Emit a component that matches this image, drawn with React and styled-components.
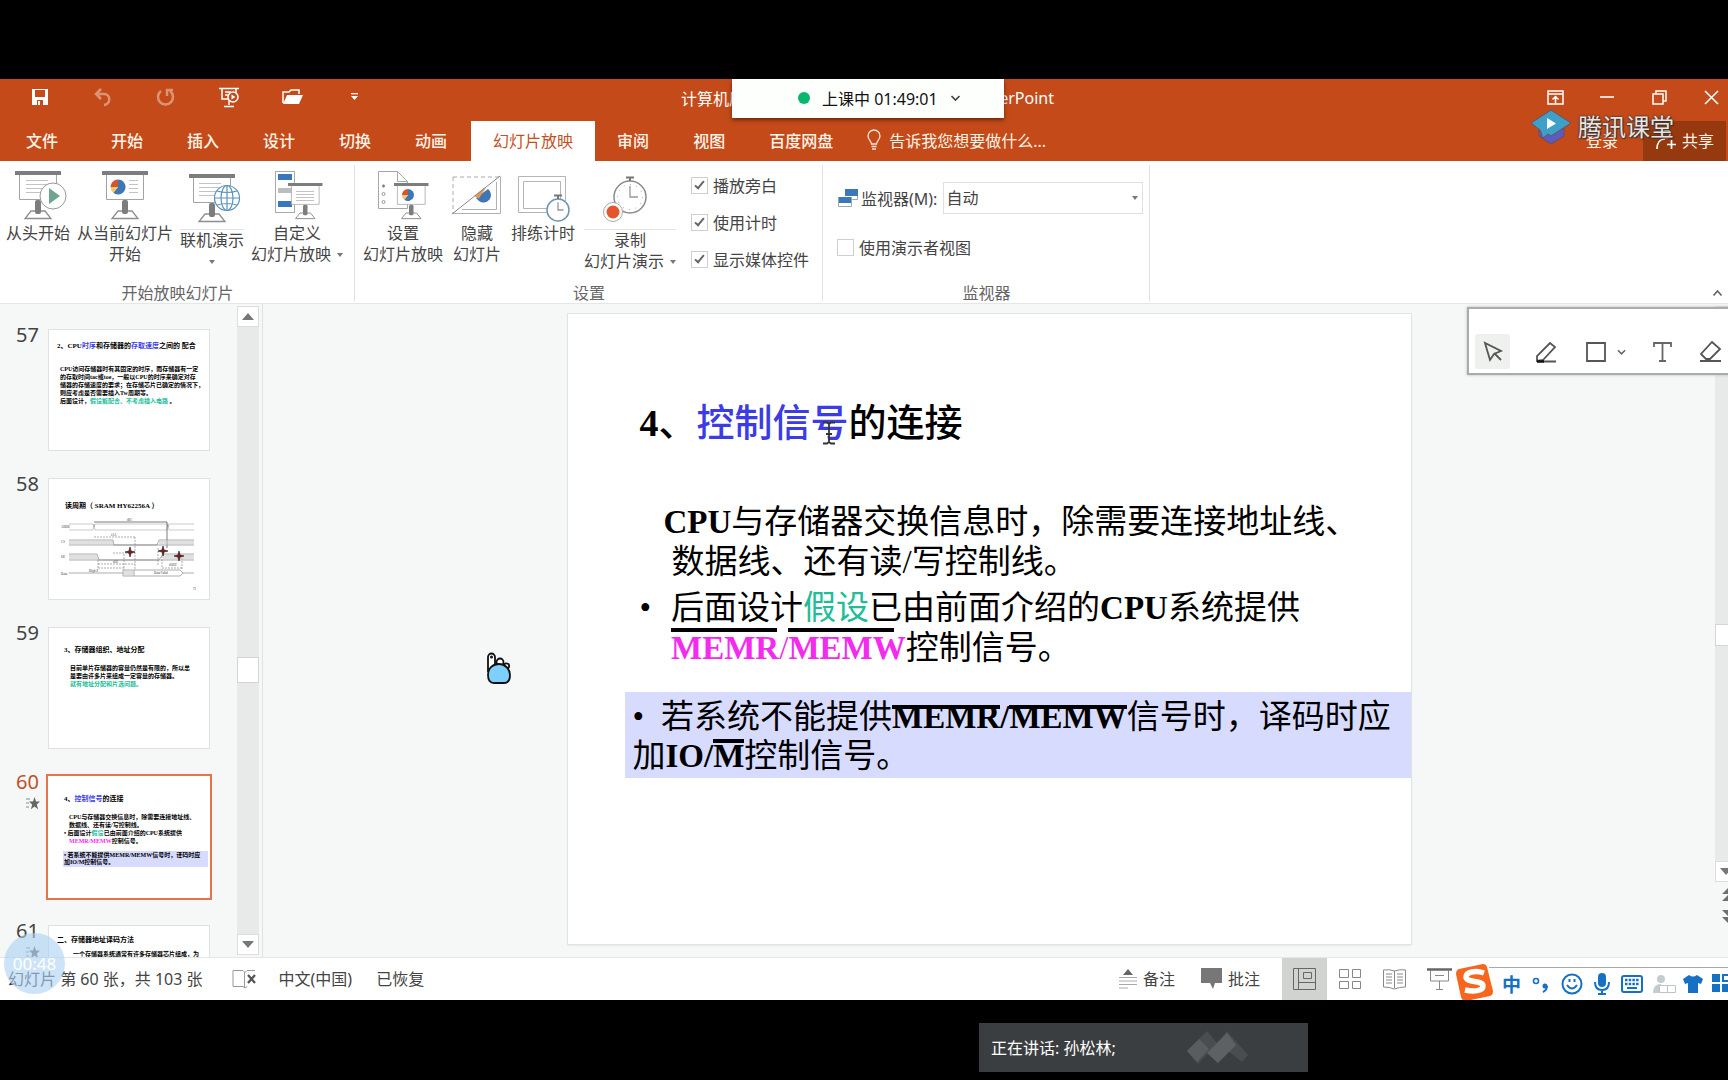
import React, { useState } from 'react';
import styled, { createGlobalStyle, css } from 'styled-components';

const ui = '"Noto Sans", "Noto Sans CJK SC", sans-serif';
const serif = '"Liberation Serif", "Noto Sans CJK SC", serif';

const Global = createGlobalStyle`
  *, *::before, *::after { box-sizing: border-box; }
  body { margin: 0; background: #000; font-family: ${ui}; font-size: 16px; color: #444; }
  button, select, input { font: inherit; color: inherit; }
  button { border: 0; padding: 0; background: none; cursor: pointer; }
  svg { display: block; flex: none; overflow: visible; }
  h1, h2, p, ul, ol { margin: 0; padding: 0; font: inherit; list-style: none; }
`;

/* ---------- shell ---------- */
const Stage = styled.div`
  position: relative; height: 100vh; min-height: 700px; padding: 79px 0 80px;
  display: flex; flex-direction: column; overflow: hidden; background: #000;
`;
const Header = styled.header`position: relative; flex: none; background: #c44b19; color: #fff;`;
const TitleRow = styled.div`display: flex; justify-content: space-between; height: 42px; padding: 0 7px 6px 30px; align-items: center;`;
const Row = styled.div`display: flex; align-items: center; gap: ${p => p.$gap || 0}px;`;
const IconButton = styled.button`
  display: flex; align-items: center; justify-content: center;
  width: ${p => p.$w || 20}px; height: ${p => p.$h || 22}px; opacity: ${p => (p.$dim ? 0.4 : 1)};
`;
const DocTitle = styled.h1`
  position: absolute; top: 0; left: 50%; width: 373px; margin-left: -183px; height: 42px;
  display: flex; justify-content: space-between; align-items: center; padding-bottom: 4px; white-space: nowrap;
`;
const ClassPill = styled.button`
  position: absolute; top: 0; left: 50%; margin-left: -132px; width: 272px; height: 39px; background: #fdfffd; color: #111;
  display: flex; align-items: center; gap: 12px; padding: 0 0 2px 66px; box-shadow: 0 2px 4px rgba(60, 15, 0, .65); white-space: nowrap;
`;
const Dot = styled.i`width: 12px; height: 12px; border-radius: 50%; background: #07b86c;`;
const TabRow = styled.nav`display: flex; align-items: stretch; height: 40px; color: #fff3e8;`;
const Tab = styled.button`
  padding: 0 22px; line-height: 38px; height: 40px; white-space: nowrap; font-weight: 500;
  ${p => p.$file && css`padding: 0 31px 0 26px;`}
  ${p => p.$active && css`background: #fff; color: #c4501f; margin-left: 2px; font-weight: 400;`}
`;
const TellMe = styled.button`display: flex; align-items: center; gap: 8px; margin-left: 12px; padding-bottom: 2px; white-space: nowrap;`;
const Login = styled.button`margin-left: auto; padding: 0 25px 2px 0;`;
const Share = styled.button`
  display: flex; align-items: center; gap: 6px; width: 83px; padding: 0 0 2px 13px; margin-right: 2px; background: #97390f;
`;
const Watermark = styled.div`
  position: absolute; right: 54px; top: 30px; display: flex; align-items: center; gap: 6px; white-space: nowrap;
  font-size: 24px; line-height: 36px; color: #ece4e0; text-shadow: 0 0 2px #333, 0 0 2px #333, 1px 1px 1px #333;
`;

/* ---------- ribbon ---------- */
const Ribbon = styled.section`display: flex; flex: none; height: 143px; background: #fff; border-bottom: 1px solid #e4e7e5; position: relative;`;
const GroupBox = styled.div`
  position: relative; display: flex; flex-direction: column; width: ${p => p.$w}px; color: #444;
  &::after { content: ''; position: absolute; right: 0; top: 4px; bottom: 2px; width: 1px; background: #e2e2e2; }
`;
const GroupBody = styled.div`flex: 1; display: flex; align-items: flex-start; gap: ${p => p.$gap}px; padding: 9px 0 0 ${p => p.$left}px;`;
const GroupName = styled.div`height: 21px; line-height: 22px; text-align: center; color: #666;`;
const BigButton = styled.button`display: flex; flex-direction: column; align-items: center; line-height: 21px; white-space: nowrap;`;
const BigIcon = styled.span`
  display: flex; justify-content: center; align-items: flex-start; width: 100%; height: 53px;
  ${p => p.$split && css`height: 60px; padding-top: 3px; border-bottom: 1px solid #e4e4e4;`}
`;
const Line = styled.span`display: flex; align-items: center; justify-content: center; gap: 6px; height: 21px;`;
const CaretMark = styled.i`border: 3px solid transparent; border-top: 4px solid #777; border-bottom: 0;`;
const Checks = styled.div`display: flex; flex-direction: column; gap: 13px; padding: 3px 0 0 6px;`;
const CheckLabel = styled.label`display: flex; align-items: center; gap: 5px; height: 24px; white-space: nowrap;`;
const Box = styled.input.attrs({ type: 'checkbox' })`
  appearance: none; position: relative; width: 17px; height: 17px; margin: 0; border: 1px solid #cfcfcf; background: #fff;
  &:checked::after {
    content: ''; position: absolute; left: 5px; top: 1px; width: 5px; height: 10px;
    border: solid #666; border-width: 0 2px 2px 0; transform: rotate(40deg);
  }
`;
const MonitorBody = styled.div`flex: 1; display: flex; flex-direction: column; gap: 21px; padding: 21px 0 0 14px;`;
const MonitorRow = styled.div`display: flex; align-items: center; gap: 2px; white-space: nowrap; height: 32px;`;
const SelectWrap = styled.div`
  position: relative; width: 200px; margin-left: 4px;
  & > i { position: absolute; right: 5px; top: 14px; pointer-events: none; }
`;
const Select = styled.select`appearance: none; width: 100%; height: 32px; padding: 0 2px; border: 1px solid #e0e0e0; border-radius: 0; background: #fff;`;
const Collapse = styled.button`position: absolute; right: 4px; bottom: 6px;`;

/* ---------- workspace ---------- */
const Work = styled.main`position: relative; flex: 1; min-height: 0; display: flex; background: #f5f8f6; overflow: hidden;`;
const ThumbPane = styled.ol`width: 237px; flex: none; overflow: hidden; padding: 25px 0 0 16px; display: flex; flex-direction: column; gap: 27px;`;
const ThumbItem = styled.li`display: flex; flex: none; gap: 8px; height: 122px;`;
const ThumbMeta = styled.div`
  width: 24px; font-size: 20px; line-height: 20px; color: ${p => (p.$on ? '#c0502c' : '#444')};
  display: flex; flex-direction: column; gap: 5px; margin-top: -4px;
  & > svg { align-self: flex-end; }
`;
const Thumb = styled.div`
  width: 162px; height: 122px; background: #fff; overflow: hidden; color: #000; font-family: ${serif}; font-weight: 700;
  font-size: 6px; line-height: 8px; white-space: nowrap; border: 1px solid #dfe2e0;
  display: flex; flex-direction: column; padding: ${p => p.$pad};
  ${p => p.$on && css`border: 0; outline: 2px solid #e5744a; outline-offset: 0;`}
`;
const ThumbTitle = styled.p`font-size: 7px; line-height: 10px; margin: 0 0 ${p => p.$gap}px ${p => p.$out || 0}px;`;
const MiniBullet = styled.p`text-indent: -5px;`;
const MiniMark = styled.div`background: #d7dcff; margin: 6px 2px 0 -6px; padding: 1px; line-height: 7px;`;
const Ink = styled.span`color: ${p => p.$c};`;

const Bar = styled.div`
  flex: none; width: ${p => p.$w}px; display: flex; flex-direction: column; background: #e8eae9; overflow: hidden;
  margin: ${p => p.$m || '0'};
`;
const BarButton = styled.button`
  flex: none; height: 21px; width: 22px; background: #fff; border: 1px solid #dcdedd; display: flex; align-items: center; justify-content: center;
`;
const Handle = styled.div`flex: none; width: 22px; height: ${p => p.$h}px; background: #fff; border: 1px solid #d4d6d5;`;
const Grow = styled.div`flex: ${p => p.$n} 1 0;`;
const JumpBox = styled.div`background: #f5f8f6; display: flex; flex-direction: column; gap: 9px; padding: 5px 0 33px 4px;`;

const Editor = styled.section`flex: 1; min-width: 0; border-left: 1px solid #dfe2e0; margin-left: 3px; padding: 10px 12px 13px; display: flex; justify-content: center;`;
const Slide = styled.article`
  width: 843px; max-width: 100%; background: #fff; box-shadow: 0 0 0 1px #e2e4e3, 0 1px 2px #ccc; color: #000;
  font-family: ${serif}; font-size: 33px; line-height: 40px; white-space: nowrap; padding: 87px 0 0 57px; overflow: hidden;
`;
const SlideTitle = styled.h2`font-size: 38px; line-height: 44px; font-weight: 500; margin: 0 0 57px 15px;`;
const Para = styled.p`padding-left: 47px; text-indent: ${p => p.$indent || 0}px;`;
const Bullet = styled.p`display: flex; gap: 20px; padding-left: 15px; margin-top: 6px;`;
const Marked = styled.div`background: #d7dcff; margin-top: 24px; padding: 5px 0 2px 8px; height: 86px;`;
const MarkedLine = styled.p`height: 39px; & > i { font-style: normal; margin-right: 17px; }`;
const Signal = styled.b`
  position: relative; color: ${p => p.$c || 'inherit'};
  &::before { content: ''; position: absolute; left: 0; right: ${p => p.$short || 0}px; top: ${p => p.$top}px; height: 4px; background: #000; }
`;
const Pointer = styled.span`position: absolute; left: ${p => p.$x}px; top: ${p => p.$y}px; pointer-events: none;`;

const Float = styled.div`
  position: absolute; right: -20px; top: 3px; width: 281px; height: 68px; background: #fff; border: 2px solid #a9acaa; box-shadow: 0 0 3px #bbb;
  display: flex; align-items: flex-end; gap: 18px; padding: 0 0 4px 6px; overflow: hidden;
`;
const Tool = styled.button`
  flex: none; width: ${p => p.$w || 35}px; height: 35px; display: flex; align-items: center; justify-content: center; gap: 11px; border-radius: 3px;
  background: ${p => (p.$on ? '#eff1ef' : 'transparent')};
`;

/* ---------- status ---------- */
const Status = styled.footer`position: relative; flex: none; height: 43px; display: flex; align-items: center; background: #fff; border-top: 1px solid #e4e7e5; padding-left: 8px; white-space: nowrap; overflow: hidden;`;
const StatusText = styled.span`padding-bottom: 2px; margin-right: ${p => p.$r || 0}px;`;
const Spacer = styled.div`flex: 1;`;
const StatusButton = styled.button`display: flex; align-items: center; gap: 6px; padding-bottom: 2px; margin-right: ${p => p.$r || 0}px;`;
const View = styled.button`width: 45px; height: 43px; display: flex; align-items: center; justify-content: center; background: ${p => (p.$on ? '#d0d3d0' : 'none')};`;
const Ime = styled.div`
  display: flex; align-items: center; gap: 11px; width: 239px; height: 34px; margin-top: 9px; border: solid #aaa; border-width: 1px 0;
  color: #1670c4; font-size: 19px; font-weight: 700; overflow: visible; margin-left: 27px; padding-left: 13px;
`;
const ImeLogo = styled.span`position: absolute; right: 234px; top: 5px;`;
const Timer = styled.div`
  position: absolute; left: 4px; bottom: 86px; width: 61px; height: 61px; border-radius: 50%; background: rgba(170, 208, 243, .6);
  color: #fff; font-size: 17px; display: flex; align-items: center; justify-content: center;
`;
const Caption = styled.div`
  position: absolute; left: 979px; bottom: 8px; width: 329px; height: 49px; background: #3b3e40; color: #fff;
  display: flex; align-items: center; justify-content: space-between; padding: 0 60px 2px 12px; white-space: nowrap;
`;

/* ---------- drawings ---------- */
const Pie = ({ x, y, r }) => (
  <g transform={`translate(${x} ${y}) scale(${r / 8})`}>
    <path d="M0 0V-8A8 8 0 1 1-5 6.2z" fill="#3f76b5" />
    <path d="M0 0L-5 6.2A8 8 0 0 1-8 0z" fill="#f3c566" />
    <path d="M0 0H-8A8 8 0 0 1 0-8z" fill="#d2552c" />
  </g>
);
const Easel = ({ x = 0, y = 0, w = 46, s = 1 }) => (
  <g transform={`translate(${x} ${y}) scale(${s})`}>
    <rect width={w} height="4" fill="#7c7e7d" />
    <path d={`M4.500 4V28.500H${w - 4.5}V4`} fill="#fff" stroke="#a3a3a3" />
    <path d={`M${w / 2 - 7} 40l-6 7.500h26l-6-7.500z`} fill="#fff" stroke="#8e8e8e" strokeWidth="1.300" />
    <rect x={w / 2 - 3} y="29" width="6" height="14" rx="2" fill="#7c7e7d" />
  </g>
);
const Lines = ({ x, y, w, n, g = 4 }) => <path d={Array.from({ length: n }, (_, i) => `M${x} ${y + i * g}h${w}`).join('')} stroke="#c3c3c3" />;
const Watch = ({ x, y, r, c }) => (
  <g fill="none" stroke={c}>
    <circle cx={x} cy={y} r={r} fill="#fff" strokeWidth="1.500" />
    <path d={`M${x} ${y - r * .7}V${y}H${x + r * .5}`} stroke="#999" strokeWidth="1.300" />
    <path d={`M${x - 4} ${y - r - 3.5}h8M${x} ${y - r - 3}v3`} stroke="#777" strokeWidth="2" />
  </g>
);
const art = {
  start: <svg width="46" height="50"><Easel x={0} y={1} /><Lines x={11} y={10.5} w={22} n={4} /><circle cx="38" cy="26" r="13" fill="#fff" stroke="#999" /><path d="M34 18v16l11-8z" fill="#6fa48f" /></svg>,
  current: <svg width="48" height="50"><Easel x={1} y={1} /><Pie x={17} y={17} r={7.5} /><Lines x={28} y={10.5} w={9} n={4} /></svg>,
  online: <svg width="46" height="50"><Easel x={0} y={1} /><Lines x={10} y={10.5} w={22} n={4} /><g fill="none" stroke="#5c93ba" strokeWidth="1.200"><circle cx="38" cy="25" r="12.500" fill="#fff" /><ellipse cx="38" cy="25" rx="6" ry="12.500" /><path d="M38 12.500v25M25.500 25h25M28 18q10 3 20 0M28 32q10-3 20 0" /></g></svg>,
  custom: <svg width="46" height="50"><rect x="1.500" y="1.500" width="19" height="41" fill="#fff" stroke="#aaa" /><path d="M4 4h14v6H4zM4 31h14v6H4z" fill="#3a78bb" /><path d="M4 18h14v5H4z" fill="#bdbdbd" /><Easel x={14} y={13} s={0.75} /><Lines x={22} y={21.5} w={18} n={4} g={3} /></svg>,
  setup: <svg width="52" height="50"><path d="M1.500 1.500h19l10 10v27h-29zM20.500 1.500v10h10" fill="#fff" stroke="#a7a7a7" /><g fill="#fff" stroke="#999"><circle cx="6.500" cy="16" r="1.200" fill="#777" /><circle cx="6.500" cy="24" r="1.500" /><circle cx="6.500" cy="32" r="1.500" /></g><Easel x={17} y={13} s={0.75} /><Pie x={31} y={25} r={6} /></svg>,
  hide: <svg width="50" height="50"><path d="M1 7h46M1 7v36" stroke="#aaa" strokeDasharray="4 3" /><path d="M48.500 6.500v37H1M44.500 12v27.500H10" fill="none" stroke="#b0b0b0" /><path d="M24 28L36 19a7.500 7.500 0 1 1-9 12z" fill="#3f76b5" /><path d="M22 26l10-8 2-.500-7 11z" fill="#e39a55" /><path d="M0 44L48 6" stroke="#888" /></svg>,
  rehearse: <svg width="52" height="54"><path d="M1.500 6.500h47v36h-47zM6.500 11.500h37v27h-37z" fill="#fff" stroke="#b5b5b5" /><Watch x={41} y={40} r={11} c="#6d93b5" /></svg>,
  record: <svg width="58" height="52"><Watch x={29} y={24} r={16} c="#8b8b8b" /><circle cx="29" cy="24" r="12.500" fill="none" stroke="#999" strokeDasharray="1 5.500" /><circle cx="12" cy="39" r="9.500" fill="#fff" stroke="#aaa" /><circle cx="12" cy="39" r="6.500" fill="#e4572e" /></svg>,
};
const Chevron = ({ w = 10, up, c = '#444' }) => (
  <svg width={w} height="8" viewBox="0 0 10 8"><path d={up ? 'M1 6.500l4-4.500 4 4.500' : 'M1 2l4 4 4-4'} fill="none" stroke={c} strokeWidth="1.700" /></svg>
);
const Tri = ({ up, w = 12 }) => <svg width={w} height="7" viewBox="0 0 12 7"><path d={up ? 'M0 7L6 0l6 7z' : 'M0 0h12L6 7z'} fill="#777" /></svg>;
const Jump = ({ up }) => <svg width="18" height="14"><path d={up ? 'M2 7l7-7 7 7zM2 14l7-7 7 7z' : 'M2 0h14L9 7zM2 7h14l-7 7z'} fill="#707070" /></svg>;
const Star = () => <svg width="14" height="13"><path d="M0 2h4M0 6h3M0 10h3" stroke="#888" /><path d="M8.500 0l1.500 4.600h4l-3.200 2.800 1.300 4.800-3.600-2.800-3.600 2.800 1.300-4.800L3 4.600h4z" fill="#666" /></svg>;

const Timing = () => (
  <svg width="140" height="72" viewBox="0 0 140 72">
    <g fill="none" stroke="#777" strokeWidth=".6">
      <path d="M10 6h24l1 3 1-3h72l1 3 1-3h25M10 12h24l1-6 1 6h72l1-6 1 6h25" stroke="#aaa" />
      <path d="M35 4h73v26" stroke="#222" /><path d="M10 22h44l1 5h43l2-5h35M10 27h125M10 36h28l2 6h60l4-6h31M10 42h125" />
      <path d="M10 55h54M64 52h11v6H64zM75 52h46l3 3-3 3H75M124 55h11" />
      <path d="M35 19h41M54 35h22M39 46h37M39 50h26M76 19v33M65 36v16M39 42v9M103 38v12M123 40v12M103 50h20M99 30v18" strokeDasharray="2 1" />
    </g>
    <path d="M10 22h44v5H10zM100 22h35v5h-35zM10 36h29v6H10zM104 36h31v6h-31zM64 52h11v6H64z" fill="#ccc" opacity=".6" />
    <g fill="#8d1717" stroke="#111" strokeWidth=".6">{[[71, 34], [104, 33], [120, 38]].map(([x, y]) => <path key={x} d={`M${x} ${y - 5}l1 4 4 1-4 1-1 4-1-4-4-1 4-1z`} />)}</g>
    <g fill="#777" fontSize="3" fontFamily="Liberation Serif"><text x="68" y="3">tRC</text><text x="2" y="10">ADDR</text><text x="2" y="25">CS</text><text x="2" y="40">OE</text><text x="2" y="57">Data</text><text x="30" y="54">High-Z</text><text x="95" y="56">Data Valid</text><text x="52" y="18">tAA</text><text x="54" y="45">tOE</text><text x="110" y="48">tOHZ</text><text x="134" y="72">71</text></g>
  </svg>
);

const green = '#20bd98';
const blue = '#3c3ce6';
const pink = '#f42bee';

const slides = [
  { n: 57, pad: '11px 0 0 11px', body: <><ThumbTitle $gap={14} $out={-3}>2、CPU<Ink $c={blue}>时序</Ink>和存储器的<Ink $c={blue}>存取速度</Ink>之间的 配合</ThumbTitle><p>CPU访问存储器时有其固定的时序，而存储器有一定</p><p>的存取时间tac或toe，一般以CPU的时序来确定对存</p><p>储器的存储速度的要求；在存储芯片已确定的情况下，</p><p>则应考虑是否需要插入Tw周期等。</p><p>后面设计，<Ink $c={green}>假设能配合、不考虑插入电路</Ink> 。</p></> },
  { n: 58, pad: '22px 0 0 10px', body: <><ThumbTitle $gap={7} $out={6}>读周期（ SRAM HY62256A ）</ThumbTitle><Timing /></> },
  { n: 59, pad: '17px 0 0 21px', body: <><ThumbTitle $gap={9} $out={-6}>3、存储器组织、地址分配</ThumbTitle><p>目前单片存储器的容量仍然是有限的，所以总</p><p>是要由许多片来组成一定容量的存储器。</p><p><Ink $c={green}>就有地址分配和片选问题。</Ink></p></> },
  { n: 60, star: true, on: true, pad: '18px 0 0 21px', body: <><ThumbTitle $gap={9} $out={-5}>4、<Ink $c={blue}>控制信号</Ink>的连接</ThumbTitle><p>CPU与存储器交换信息时，除需要连接地址线、</p><p>数据线、还有读/写控制线。</p><MiniBullet>• 后面设计<Ink $c={green}>假设</Ink>已由前面介绍的CPU系统提供</MiniBullet><p><Ink $c={pink}>MEMR/MEMW</Ink>控制信号。</p><MiniMark><p>• 若系统不能提供MEMR/MEMW信号时，译码时应</p><p>加IO/M控制信号。</p></MiniMark></> },
  { n: 61, star: true, pad: '9px 0 0 24px', body: <><ThumbTitle $gap={5} $out={-16}>二、存储器地址译码方法</ThumbTitle><p>一个存储器系统通常有许多存储器芯片组成，为</p></> },
];

const tabs = ['文件', '开始', '插入', '设计', '切换', '动画', '幻灯片放映', '审阅', '视图', '百度网盘'];

function RibbonButton({ icon, lines, split, caret }) {
  return (
    <BigButton>
      <BigIcon $split={split}>{art[icon]}</BigIcon>
      {lines.map((t, i) => <Line key={i}>{t}{caret && i === lines.length - 1 && <CaretMark />}</Line>)}
    </BigButton>
  );
}

function Check({ label, on }) {
  const [checked, set] = useState(!!on);
  return <CheckLabel><Box checked={checked} onChange={e => set(e.target.checked)} />{label}</CheckLabel>;
}

export default function App() {
  return (
    <Stage>
      <Global />
      <Header>
        <TitleRow>
          <Row $gap={43}>
            <IconButton aria-label="保存"><svg width="18" height="18"><path d="M1 1h16v16H1z" fill="#fff" /><path d="M4 2h10v7H4zM6 12h6v5H6z" fill="#c44b19" /><path d="M7 13h2v4H7z" fill="#fff" /></svg></IconButton>
            <IconButton aria-label="撤消" $dim><svg width="18" height="18" fill="none" stroke="#fff" strokeWidth="2.500"><path d="M7 1L2 6l5 5M2 6h8c7 0 7 10 0 11" /></svg></IconButton>
            <IconButton aria-label="恢复" $dim><svg width="20" height="18" fill="none" stroke="#fff" strokeWidth="2.500"><path d="M5 3a7.500 7.500 0 1 0 9 0M11 8V2h6" /></svg></IconButton>
            <IconButton aria-label="从头放映"><svg width="21" height="21" fill="none" stroke="#fff" strokeWidth="1.500"><path d="M0 1.500h20M3 2v10h6M17 2v4M6 5h6M6 8h3M10 13v5M5 19.500h10" /><circle cx="14" cy="10" r="5" /><path d="M12.500 7.500v5l4-2.500z" fill="#fff" stroke="none" /></svg></IconButton>
            <IconButton aria-label="打开"><svg width="21" height="16"><path d="M1 14V3h6l2-2h8v4" fill="none" stroke="#fff" strokeWidth="1.500" /><path d="M5 6h16l-4 9H1z" fill="#fff" /></svg></IconButton>
            <IconButton aria-label="自定义快速访问工具栏"><svg width="8" height="8"><path d="M0 .7h7" stroke="#fff" strokeWidth="1.300" /><path d="M0 3h7L3.500 7z" fill="#fff" /></svg></IconButton>
          </Row>
          <Row $gap={32}>
            <IconButton aria-label="功能区显示选项"><svg width="17" height="15" fill="none" stroke="#fff" strokeWidth="1.500"><path d="M1 1h15v13H1zM1 4h15M8.500 13V7M5.500 9.500l3-3 3 3" /></svg></IconButton>
            <IconButton aria-label="最小化"><svg width="14" height="3"><path d="M0 1h14" stroke="#fff" strokeWidth="1.600" /></svg></IconButton>
            <IconButton aria-label="还原"><svg width="15" height="15" fill="none" stroke="#fff" strokeWidth="1.500"><path d="M1 4h10v10H1zM4 4V1h10v10h-3" /></svg></IconButton>
            <IconButton aria-label="关闭"><svg width="15" height="15" stroke="#fff" strokeWidth="1.500"><path d="M1 1l13 13M14 1L1 14" /></svg></IconButton>
          </Row>
        </TitleRow>
        <DocTitle><span>计算机原</span><span>PowerPoint</span></DocTitle>
        <ClassPill><Dot /><span>上课中 01:49:01</span><Chevron w={11} /></ClassPill>
        <TabRow>
          {tabs.map((t, i) => <Tab key={t} $file={i === 0} $active={i === 6}>{t}</Tab>)}
          <TellMe><svg width="14" height="20" fill="none" stroke="#fbe4d6" strokeWidth="1.300"><path d="M4.500 14c0-3-3.500-4-3.500-8a6 6 0 0 1 12 0c0 4-3.500 5-3.500 8zM4.500 16.500h5M5 19h4" /></svg>告诉我您想要做什么...</TellMe>
          <Login>登录</Login>
          <Share><svg width="20" height="20" fill="none" stroke="#fff" strokeWidth="1.700"><circle cx="10" cy="4" r="4" /><path d="M1 19c0-6 3-10 8-10M11 14.500h9M15.500 10v9" /></svg>共享</Share>
        </TabRow>
        <Watermark>
          <svg width="42" height="36" viewBox="0 0 42 36"><path d="M9 20v7l12 8 13-8v-8z" fill="#5c5cc0" stroke="#704a55" /><path d="M21 1l20 13-20 13-3-2-5 4-3-8L1 14z" fill="#3e9fc9" stroke="#66545a" /><path d="M17 9v11l9-5.500z" fill="#fff" /></svg>
          腾讯课堂
        </Watermark>
      </Header>

      <Ribbon>
        <GroupBox $w={355}>
          <GroupBody $gap={7} $left={6}>
            <RibbonButton icon="start" lines={['从头开始']} />
            <RibbonButton icon="current" lines={['从当前幻灯片', '开始']} />
            <RibbonButton icon="online" lines={['联机演示', '']} split caret />
            <RibbonButton icon="custom" lines={['自定义', '幻灯片放映']} caret />
          </GroupBody>
          <GroupName>开始放映幻灯片</GroupName>
        </GroupBox>
        <GroupBox $w={468}>
          <GroupBody $gap={9} $left={8}>
            <RibbonButton icon="setup" lines={['设置', '幻灯片放映']} />
            <RibbonButton icon="hide" lines={['隐藏', '幻灯片']} />
            <RibbonButton icon="rehearse" lines={['排练计时']} />
            <RibbonButton icon="record" lines={['录制', '幻灯片演示']} split caret />
            <Checks><Check label="播放旁白" on /><Check label="使用计时" on /><Check label="显示媒体控件" on /></Checks>
          </GroupBody>
          <GroupName>设置</GroupName>
        </GroupBox>
        <GroupBox $w={327}>
          <MonitorBody>
            <MonitorRow>
              <svg width="22" height="20"><path d="M8.500 1.500h12v10h-12zM1.500 8.500h13v10h-13z" fill="#fff" stroke="#9aa" /><path d="M8 1h13v7H8zM2 8h12v7H2z" fill="#3a78bb" /><path d="M1 8.500h14" stroke="#fff" /></svg>
              <label htmlFor="monitor">监视器(M):</label>
              <SelectWrap><Select id="monitor"><option>自动</option></Select><CaretMark /></SelectWrap>
            </MonitorRow>
            <Check label="使用演示者视图" />
          </MonitorBody>
          <GroupName>监视器</GroupName>
        </GroupBox>
        <Collapse aria-label="折叠功能区"><Chevron w={13} up c="#666" /></Collapse>
      </Ribbon>

      <Work>
        <ThumbPane>
          {slides.map(s => (
            <ThumbItem key={s.n}>
              <ThumbMeta $on={s.on}><span>{s.n}</span>{s.star && <Star />}</ThumbMeta>
              <Thumb $pad={s.pad} $on={s.on}>{s.body}</Thumb>
            </ThumbItem>
          ))}
        </ThumbPane>
        <Bar $w={22} $m="2px 0">
          <BarButton aria-label="向上滚动"><Tri up /></BarButton>
          <Grow $n={330} /><Handle $h={26} /><Grow $n={251} />
          <BarButton aria-label="向下滚动"><Tri /></BarButton>
        </Bar>
        <Editor>
          <Slide>
            <SlideTitle><b>4</b>、<Ink $c={blue}>控制信号</Ink>的连接</SlideTitle>
            <Para $indent={-8}><b>CPU</b>与存储器交换信息时，除需要连接地址线、</Para>
            <Para>数据线、还有读/写控制线。</Para>
            <Bullet><span>•</span><span>后面设计<Ink $c={green}>假设</Ink>已由前面介绍的<b>CPU</b>系统提供<br /><Signal $c={pink} $top={-2} $short={2}>MEMR</Signal><Ink $c={pink}>/</Ink><Signal $c={pink} $top={-2} $short={12}>MEMW</Signal>控制信号。</span></Bullet>
            <Marked>
              <MarkedLine><i>•</i>若系统不能提供<Signal $top={6}>MEMR</Signal><b>/</b><Signal $top={6}>MEMW</Signal>信号时，译码时应</MarkedLine>
              <MarkedLine>加<b>IO/</b><Signal $top={1}>M</Signal>控制信号。</MarkedLine>
            </Marked>
          </Slide>
        </Editor>
        <Bar $w={13} $m="2px 0 0">
          <BarButton aria-label="上一行"><Tri up /></BarButton>
          <Grow $n={298} /><Handle $h={22} /><Grow $n={215} />
          <BarButton aria-label="下一行"><Tri /></BarButton>
          <JumpBox><IconButton aria-label="上一张幻灯片" $h={14}><Jump up /></IconButton><IconButton aria-label="下一张幻灯片" $h={14}><Jump /></IconButton></JumpBox>
        </Bar>
        <Pointer $x={822} $y={117}><svg width="14" height="24"><path d="M1 1.500h4l2 1.500 2-1.500h4M7 3v18M1 22.500h4l2-1.500 2 1.500h4M4 13h6" fill="none" stroke="#333" strokeWidth="1.800" /></svg></Pointer>
        <Pointer $x={486} $y={348}><svg width="26" height="32" stroke="#111" strokeWidth="1.800"><path d="M2 20V5a3.500 3.500 0 0 1 7 0v10" fill="#fff" /><circle cx="5.500" cy="5" r=".6" /><circle cx="14" cy="10" r="3.500" fill="#fff" /><circle cx="20.500" cy="14" r="2.700" fill="#fff" /><path d="M2 23c0-7 5-11 11-11s11 5 11 11-3 8-6 8H8c-4 0-6-3-6-8z" fill="#7dd0fb" /></svg></Pointer>
        <Float>
          <Tool $on aria-label="选择"><svg width="20" height="21" fill="none" stroke="#555" strokeWidth="1.800"><path d="M2 2l5 17 4-6 7-3zM11 12l7 7" /></svg></Tool>
          <Tool aria-label="画笔"><svg width="22" height="22" fill="none" stroke="#555" strokeWidth="1.800"><path d="M2 20v-5L15 2l5 4L8 19zM8 20.500h13" /><path d="M2 20.500h7" stroke="#111" strokeWidth="2.500" /></svg></Tool>
          <Tool aria-label="形状" $w={50}><svg width="20" height="20"><path d="M1 1h18v18H1z" fill="none" stroke="#555" strokeWidth="1.800" /></svg><Chevron w={9} c="#666" /></Tool>
          <Tool aria-label="文本" $w={26}><svg width="19" height="20" fill="none" stroke="#666" strokeWidth="1.800"><path d="M1 5V1h17v4M9.500 1v18M6 19h7" /></svg></Tool>
          <Tool aria-label="橡皮擦"><svg width="22" height="21" fill="none" stroke="#555" strokeWidth="1.800"><path d="M12 1l8 7-10 10H6l-5-5zM0 20h21" /></svg></Tool>
        </Float>
      </Work>

      <Status>
        <StatusText $r={8}>幻灯片 第 60 张，共 103 张</StatusText>
        <IconButton aria-label="拼写检查" $w={68}><svg width="25" height="20" fill="none" stroke="#999"><path d="M1 1.500h10l2 2 2-2h8M1 1.500v16h10l2 1.500 2-1.500M12.500 3v16" /><path d="M16 6l7 8M23 6l-7 8" stroke="#555" strokeWidth="2.300" /></svg></IconButton>
        <StatusText $r={24}>中文(中国)</StatusText>
        <StatusText>已恢复</StatusText>
        <Spacer />
        <StatusButton $r={26}><svg width="18" height="21"><path d="M4 7l5-6 5 6z" fill="#666" /><path d="M0 9.500h18M0 13h18M0 16.500h18M0 20h9" stroke="#aaa" /></svg>备注</StatusButton>
        <StatusButton $r={22}><svg width="21" height="21"><path d="M0 0h21v15h-7l-2 6-3-6H0z" fill="#777" /></svg>批注</StatusButton>
        <View $on aria-label="普通视图"><svg width="25" height="24" fill="none" stroke="#666"><path d="M1.500 1.500h22v21h-22zM6.500 1.500v21M6.500 15.500h17M11.500 5.500h8v6h-8z" /></svg></View>
        <View aria-label="幻灯片浏览"><svg width="24" height="22" fill="none" stroke="#888"><path d="M1.500 1.500h9v8h-9zM14.500 1.500h8v8h-8zM1.500 13.500h9v7h-9zM14.500 13.500h8v7h-8z" /></svg></View>
        <View aria-label="阅读视图"><svg width="25" height="22" fill="none" stroke="#888"><path d="M12.500 3q-5-2-11-1v17q6 0 11 2 5-2 11-2V2q-6-1-11 1zv17M4 6h6M4 9h6M4 12h6M4 15h6M15 6h6M15 9h6M15 12h6M15 15h6" /></svg></View>
        <View aria-label="幻灯片放映"><svg width="25" height="22" fill="none" stroke="#888"><path d="M0 1.500h25" stroke="#666" strokeWidth="2.500" /><path d="M3.500 2v11h18V2M8 7.500h9M12.500 13v8M9 21.500h7" /></svg></View>
        <Ime>
          <IconButton aria-label="中英文">中</IconButton>
          <IconButton aria-label="标点" $w={18}><svg width="18" height="20"><circle cx="4" cy="7" r="2.500" fill="none" stroke="#1670c4" strokeWidth="1.600" /><circle cx="13" cy="12" r="2.500" fill="#1670c4" /><path d="M15 12q0 4-4 6" stroke="#1670c4" strokeWidth="2" fill="none" /></svg></IconButton>
          <IconButton aria-label="表情" $w={22}><svg width="22" height="22" fill="none" stroke="#1670c4" strokeWidth="2"><circle cx="11" cy="11" r="9.500" /><path d="M6 12q5 7 10 0M8.500 6v3M13.500 6v3" /></svg></IconButton>
          <IconButton aria-label="语音" $w={16}><svg width="16" height="22" fill="none" stroke="#1670c4" strokeWidth="2"><rect x="5" y="1" width="6" height="12" rx="3" fill="#1670c4" /><path d="M1 9q0 8 7 8t7-8M8 17v4M4 21h8" /></svg></IconButton>
          <IconButton aria-label="键盘" $w={22}><svg width="22" height="18"><rect x="1" y="1" width="20" height="16" rx="2" fill="none" stroke="#1670c4" strokeWidth="2" /><path d="M4 5h14M4 9h14" stroke="#1670c4" strokeWidth="2.500" strokeDasharray="2.500 1.200" /><path d="M6 13h10" stroke="#1670c4" strokeWidth="2" /></svg></IconButton>
          <IconButton aria-label="账户"><svg width="22" height="20" fill="none" stroke="#bcc4c8"><circle cx="8" cy="5" r="4" fill="#c5ccd0" stroke="none" /><path d="M0 19q0-9 8-9v9z" fill="#c5ccd0" stroke="none" /><path d="M6.500 11.500h8v7h-8zM14.500 11.500h8v7h-8z" fill="#fff" /></svg></IconButton>
          <IconButton aria-label="皮肤" $w={16}><svg width="20" height="20"><path d="M6 1q4 3 8 0l6 4-2 5-3-1v10H5V9L2 10 0 5z" fill="#1670c4" /></svg></IconButton>
          <IconButton aria-label="工具箱"><svg width="20" height="19"><path d="M0 0h8v8H0zM0 10h8v8H0zM10 10h8v8h-8z" fill="#1670c4" /><path d="M11 1h7v6h-7z" fill="none" stroke="#1670c4" strokeWidth="2" /></svg></IconButton>
        </Ime>
        <ImeLogo><svg width="39" height="38" viewBox="0 0 39 38"><path d="M4 6L28 1q3 0 4 3l6 24q0 4-3 5L11 38q-4 0-5-4L1 11q0-4 3-5z" fill="#f8651c" /><path d="M29 10C20 7 11 9 11 14c0 6 17 3 17 9 0 5-9 6-18 4" fill="none" stroke="#fff" strokeWidth="5.500" /></svg></ImeLogo>
      </Status>

      <Timer>00:48</Timer>
      <Caption>
        <span>正在讲话: 孙松林;</span>
        <svg width="61" height="32" viewBox="0 0 61 32"><path d="M0 20L20 0l10 12 10-12q14 16 21 24l-6 7-14-11-11 12-9-10-10 11z" fill="#4a4d4f" /><path d="M20 22L40 2l9 12-18 18z" fill="#5e6163" /><path d="M0 20L12 8l10 10-12 13z" fill="#5a5d5f" /></svg>
      </Caption>
    </Stage>
  );
}
